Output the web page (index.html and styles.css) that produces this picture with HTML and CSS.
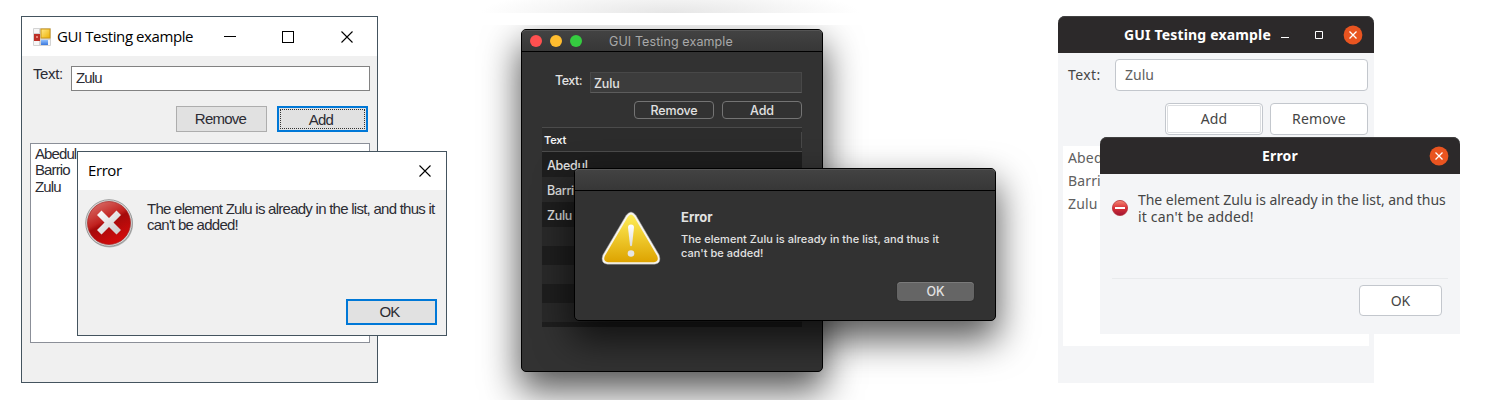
FILE: index.html
```
<!DOCTYPE html>
<html lang="en">
<head>
<meta charset="utf-8">
<title>GUI Testing example</title>
<link rel="stylesheet" href="styles.css">
</head>
<body>
<main class="desktop">
  <section class="win win-main">
    <header class="win-title">
      <svg class="win-logo" width="18" height="18" viewBox="0 0 18 18">
        <defs>
          <linearGradient id="ly" x2="1" y2="1"><stop stop-color="#ffe98a"/><stop offset="1" stop-color="#eeb100"/></linearGradient>
          <linearGradient id="lb" x2="0" y2="1"><stop stop-color="#8fc0ff"/><stop offset="1" stop-color="#3a77dc"/></linearGradient>
        </defs>
        <rect width="18" height="18" rx="1" fill="#d3d3d3"/>
        <path d="M1 1h5v4H1zM1 13h5v4H1zM15 12h2v5h-2z" fill="#f6f6f6"/>
        <rect x="1" y="6" width="6" height="7" fill="#bd3027"/><rect x="3" y="8" width="2" height="2" fill="#e88478"/>
        <rect x="8" y="1" width="9" height="9" fill="url(#ly)" stroke="#cf9714"/>
        <rect x="8" y="12" width="7" height="5" fill="url(#lb)"/>
      </svg>
      <span class="win-caption">GUI Testing example</span>
      <svg class="win-controls" width="130" height="14" viewBox="0 0 130 14" fill="none" stroke="#000">
        <path d="M0 6.500h12"/><rect x="58.500" y="1.500" width="11" height="11"/><path d="M117.500 1.500l11 11M128.500 1.500l-11 11" stroke-width="1.100"/>
      </svg>
    </header>
    <div class="win-field"><span class="win-label">Text:</span><div class="win-input">Zulu</div></div>
    <div class="win-buttons"><div class="win-btn">Remove</div><div class="win-btn win-focus"><span class="win-dotted">Add</span></div></div>
    <div class="win-list"><div>Abedul</div><div>Barrio</div><div>Zulu</div></div>
  </section>
  <section class="win win-dialog">
    <header class="win-title win-dtitle"><span>Error</span>
      <svg width="14" height="14" fill="none" stroke="#000" stroke-width="1.100"><path d="M1.500 1.500l11 11M12.500 1.500l-11 11"/></svg>
    </header>
    <div class="win-message">
      <svg width="50" height="50" viewBox="0 0 50 50">
        <defs>
          <linearGradient id="wr" x1=".2" x2=".7" y2="1"><stop stop-color="#d96e69"/><stop offset=".42" stop-color="#c1221f"/><stop offset=".5" stop-color="#a50b0b"/><stop offset="1" stop-color="#d80a0a"/></linearGradient>
          <linearGradient id="wx" x2="1" y2="1"><stop stop-color="#fff"/><stop offset="1" stop-color="#c9c9c9"/></linearGradient>
        </defs>
        <circle cx="25.500" cy="26" r="23.500" fill="#999" opacity=".65"/>
        <circle cx="25" cy="25" r="23.300" fill="#d9d9d9" stroke="#888" stroke-width=".8"/>
        <circle cx="25" cy="25" r="21.500" fill="url(#wr)" stroke="#a52422" stroke-width=".7"/>
        <path d="M13 17l4.500-4.500 7.500 7.500 7.500-7.500L37 17l-7.500 7.500L37 32l-4.500 4.500-7.500-7.500-7.500 7.500L13 32l7.500-7.500z" fill="url(#wx)"/>
      </svg>
      <p><span class="win-line">The element Zulu is already in the list, and thus it</span><br><span>can't be added!</span></p>
    </div>
    <div class="win-dfoot"><div class="win-btn win-ok">OK</div></div>
  </section>

  <div class="mac-haze"></div>
  <div class="mac-stage">
    <section class="mac mac-main">
      <header class="mac-title"><i class="dot red"></i><i class="dot yellow"></i><i class="dot green"></i><span>GUI Testing example</span></header>
      <div class="mac-field"><span class="mac-label">Text:</span><div class="mac-input">Zulu</div></div>
      <div class="mac-buttons"><div class="mac-btn">Remove</div><div class="mac-btn">Add</div></div>
      <div class="mac-table">
        <div class="mac-th"><span>Text</span></div>
        <div class="mac-tr">Abedul</div><div class="mac-tr">Barrio</div><div class="mac-tr">Zulu</div>
        <div class="mac-empty"></div>
      </div>
    </section>
    <section class="mac mac-dialog">
      <header class="mac-title"></header>
      <div class="mac-message">
        <svg width="60" height="56" viewBox="0 0 60 56">
          <defs>
            <linearGradient id="my" x2="0" y2="1"><stop stop-color="#ffee58"/><stop offset="1" stop-color="#dda300"/></linearGradient>
            <linearGradient id="me" x2="0" y2="1"><stop stop-color="#fff"/><stop offset="1" stop-color="#ddd"/></linearGradient>
          </defs>
          <path d="M25 4.500Q30-2.500 35 4.500L58.200 44Q61 52.500 53.500 53.300H6.500Q-1 52.500 1.800 44Z" fill="#f6f4ee" stroke="#888" stroke-width=".5"/>
          <path d="M26.700 6Q30 .8 33.300 6L56.200 45Q58.300 50.500 53 51.200H7Q1.700 50.500 3.800 45Z" fill="url(#my)"/>
          <path d="M27 16.500a3 3 0 0 1 6 0L31 34.500q-1 1.500-2 0Z" fill="url(#me)"/><circle cx="30" cy="42.500" r="3.300" fill="#e5e5e5"/>
        </svg>
        <div class="mac-copy"><strong>Error</strong><p><span>The element Zulu is already in the list, and thus it</span><br><span>can't be added!</span></p></div>
      </div>
      <div class="mac-dfoot"><div class="mac-ok">OK</div></div>
    </section>
  </div>

  <section class="gnome gnome-main">
    <header class="gnome-title gnome-mtitle"><span>GUI Testing example</span>
      <svg width="82" height="20" viewBox="0 0 82 20"><g fill="none" stroke="#fff"><path d="M0 12.500h8M34.500 6.500h7v7h-7z"/></g><circle cx="72" cy="10" r="9.400" fill="#e95420"/><path d="M68.500 6.500l7 7M75.500 6.500l-7 7" stroke="#fff" stroke-width="1.300"/></svg>
    </header>
    <div class="gnome-field"><span>Text:</span><div class="gnome-input">Zulu</div></div>
    <div class="gnome-buttons"><div class="gnome-btn gnome-default">Add</div><div class="gnome-btn">Remove</div></div>
    <div class="gnome-list"><div>Abedul</div><div>Barrio</div><div>Zulu</div></div>
  </section>
  <section class="gnome gnome-dialog">
    <header class="gnome-title gnome-dtitle"><span>Error</span>
      <svg width="20" height="20"><circle cx="10" cy="10" r="9.400" fill="#e95420"/><path d="M6.500 6.500l7 7M13.500 6.500l-7 7" stroke="#fff" stroke-width="1.300"/></svg>
    </header>
    <div class="gnome-message">
      <svg width="16" height="16"><defs><linearGradient id="gr" x2="0" y2="1"><stop stop-color="#f48a78"/><stop offset=".5" stop-color="#d92f35"/><stop offset="1" stop-color="#9e1535"/></linearGradient></defs><circle cx="8" cy="8" r="7.600" fill="url(#gr)" stroke="#b8323a" stroke-width=".8"/><rect x="3" y="7" width="10" height="2" fill="#fff"/></svg>
      <p><span class="gnome-line">The element Zulu is already in the list, and thus</span><br><span class="gnome-line2">it can't be added!</span></p>
    </div>
    <div class="gnome-dfoot"><div class="gnome-btn gnome-ok">OK</div></div>
  </section>
</main>
</body>
</html>
```
FILE: styles.css
```
* { box-sizing: border-box; }
body { margin: 0; background: #fff; }
p { margin: 0; }
span { white-space: nowrap; }
svg { display: block; flex: none; }
.desktop { position: relative; width: 1500px; height: 400px; overflow: hidden; }

/* Windows */
.win { position: absolute; background: #f0f0f0; border: 1px solid #44545f; font: 15px/16px "Liberation Sans", Arial, sans-serif; letter-spacing: -.9px; color: #2c2c34; }
.win-main { left: 21px; top: 16px; width: 357px; height: 367px; }
.win-dialog { left: 77px; top: 151px; width: 370px; height: 185px; }
.win-title { display: flex; align-items: center; height: 39px; background: #fff; padding-left: 11px; font: 15px/20px "Open Sans", "Noto Sans", sans-serif; letter-spacing: -.42px; color: #000; }
.win-title span { padding-bottom: 2px; }
.win-caption { width: 145px; margin-left: 6px; }
.win-controls { margin-left: 22px; }
.win-dtitle { height: 38px; padding: 0 14px 0 10px; justify-content: space-between; }
.win-field { display: flex; padding: 10px 7px 0 11px; }
.win-label { width: 38px; padding-top: 0; letter-spacing: -.4px; }
.win-input { flex: 1; height: 25px; background: #fff; border: 1px solid #828282; padding: 3px 4px; }
.win-buttons { display: flex; justify-content: flex-end; gap: 10px; padding: 15px 9px 0 0; letter-spacing: -.75px; }
.win-btn { width: 91px; height: 26px; background: #e1e1e1; border: 1px solid #adadad; display: flex; align-items: center; justify-content: center; padding-right: 2px; }
.win-focus { border: 2px solid #0078d7; padding: 1px; }
.win-dotted { flex: 1; height: 20px; line-height: 19px; border: 1px dotted #333; text-align: center; padding-right: 3px; }
.win-list { height: 200px; margin: 11px 7px 0 8px; background: #fff; border: 1px solid #8b8f98; padding: 2px 4px; line-height: 16.300px; }
.win-message { display: flex; height: 109px; padding: 8px 0 0 6px; gap: 13px; letter-spacing: -.74px; }
.win-message p { padding-top: 3px; line-height: 16.300px; }
.win-dfoot { display: flex; justify-content: flex-end; padding-right: 9px; }
.win-ok { border: 2px solid #0078d7; padding-right: 4px; }

/* macOS */
.mac-haze { position: absolute; left: 470px; top: 0; width: 400px; height: 13px; background: radial-gradient(ellipse 190px 26px at 50% 100%, #e6e6e6, #fff); }
.mac-stage { position: absolute; left: 460px; top: 25px; width: 590px; height: 375px; overflow: hidden; font: 500 12.500px/16px Inter, sans-serif; letter-spacing: -.15px; color: #e2e2e2; }
.mac { position: absolute; background: #323232; border: 1px solid #000; border-radius: 5px; box-shadow: 0 17px 36px 2px rgba(0,0,0,.65); }
.mac-main { left: 61px; top: 4px; width: 302px; height: 343px; }
.mac-dialog { left: 114px; top: 143px; width: 422px; height: 153px; }
.mac-title { height: 22px; display: flex; align-items: center; padding-left: 8px; background: linear-gradient(#434343, #373737); border-bottom: 1px solid #000; border-radius: 4px 4px 0 0; box-shadow: inset 0 1px #555; font-weight: 400; color: #a9a9a9; letter-spacing: .1px; }
.dot { width: 12px; height: 12px; border-radius: 50%; margin-right: 8px; }
.red { background: #ff5050; } .yellow { background: #ffbd2f; } .green { background: #35cc40; }
.mac-title span { margin-left: 19px; padding-top: 2px; }
.mac-field { display: flex; padding: 20px 20px 0 33px; }
.mac-label { width: 35px; padding-top: 1px; letter-spacing: -.5px; }
.mac-input { width: 212px; height: 21px; background: #3c3c3c; border: 1px solid #484848; border-bottom-color: #5c5c5c; padding: 3px; line-height: 16px; }
.mac-buttons { display: flex; justify-content: flex-end; gap: 8px; padding: 8px 20px 0 0; }
.mac-btn { width: 80px; height: 18px; border: 1px solid #747474; border-radius: 4px; display: flex; align-items: center; justify-content: center; padding-top: 2px; }
.mac-table { width: 260px; height: 200px; margin: 8px 0 0 20px; }
.mac-th { height: 25px; padding: 4px 0 3px 2px; border-top: 1px solid #4b4b4b; border-bottom: 1px solid #4b4b4b; background: #2c2c2c; font-size: 11px; font-weight: 600; color: #f2f2f2; }
.mac-th span { display: block; border-right: 1px solid #484848; letter-spacing: -.2px; }
.mac-tr { height: 25px; padding: 6px 5px; background: #1e1e1e; letter-spacing: -.3px; }
.mac-tr:nth-child(3) { background: #292929; }
.mac-empty { height: 100px; background: repeating-linear-gradient(#292929 0 19px, #1e1e1e 19px 38px); }
.mac-message { display: flex; height: 91px; padding: 20px 0 0 26px; gap: 20px; }
.mac-copy strong { display: block; font-size: 13px; font-weight: 700; line-height: 16px; margin: -2px 0 7px; letter-spacing: 0; }
.mac-copy p { font-size: 11px; line-height: 14px; letter-spacing: .03px; }
.mac-dfoot { display: flex; justify-content: flex-end; padding-right: 21px; }
.mac-ok { width: 77px; height: 19px; border-radius: 4px; background: #656565; box-shadow: inset 0 1px #7a7a7a, 0 0 1px #111; text-align: center; line-height: 19px; }

/* GNOME */
.gnome { position: absolute; background: #f4f5f7; border-radius: 7px 7px 0 0; font: 14px/17px "Noto Sans", "Open Sans", sans-serif; color: #454545; }
.gnome-main { left: 1058px; top: 16px; width: 316px; height: 367px; }
.gnome-dialog { left: 1100px; top: 137px; width: 360px; height: 197px; }
.gnome-title { display: flex; align-items: center; height: 37px; background: #2c292a; border-radius: 7px 7px 0 0; box-shadow: inset 0 1px #414141; color: #fff; font-weight: 700; letter-spacing: .17px; }
.gnome-mtitle { padding: 0 11px 0 66px; justify-content: space-between; }
.gnome-dtitle { padding: 0 11px 0 162px; justify-content: space-between; }
.gnome-field { display: flex; align-items: center; justify-content: space-between; padding: 6px 6px 0 10px; }
.gnome-field > span { padding-bottom: 2px; letter-spacing: .4px; }
.gnome-input { width: 253px; height: 32px; border: 1px solid #c3c7cd; border-radius: 4px; background: #fff; padding: 6px 9px; color: #606060; }
.gnome-buttons { display: flex; justify-content: flex-end; gap: 7px; padding: 12px 6px 0 0; letter-spacing: .15px; }
.gnome-btn { width: 98px; height: 32px; border: 1px solid #c3c7cd; border-radius: 4px; background: #fff; display: flex; align-items: center; justify-content: center; padding-bottom: 2px; }
.gnome-default { box-shadow: inset 0 0 0 1px #fff, inset 0 0 0 2px #dcdee1; }
.gnome-list { height: 200px; margin: 11px 5px 0; padding-left: 5px; background: #fff; line-height: 23px; color: #606060; letter-spacing: .15px; }
.gnome-message { display: flex; height: 105px; margin: 0 12px; gap: 10px; padding-top: 17px; border-bottom: 1px solid #e8eaec; }
.gnome-message svg { margin-top: 9px; }
.gnome-line { letter-spacing: -.04px; }
.gnome-line2 { letter-spacing: .17px; }
.gnome-dfoot { display: flex; justify-content: flex-end; padding: 6px 18px 0 0; }
.gnome-ok { width: 83px; height: 31px; padding-bottom: 0; }
```
